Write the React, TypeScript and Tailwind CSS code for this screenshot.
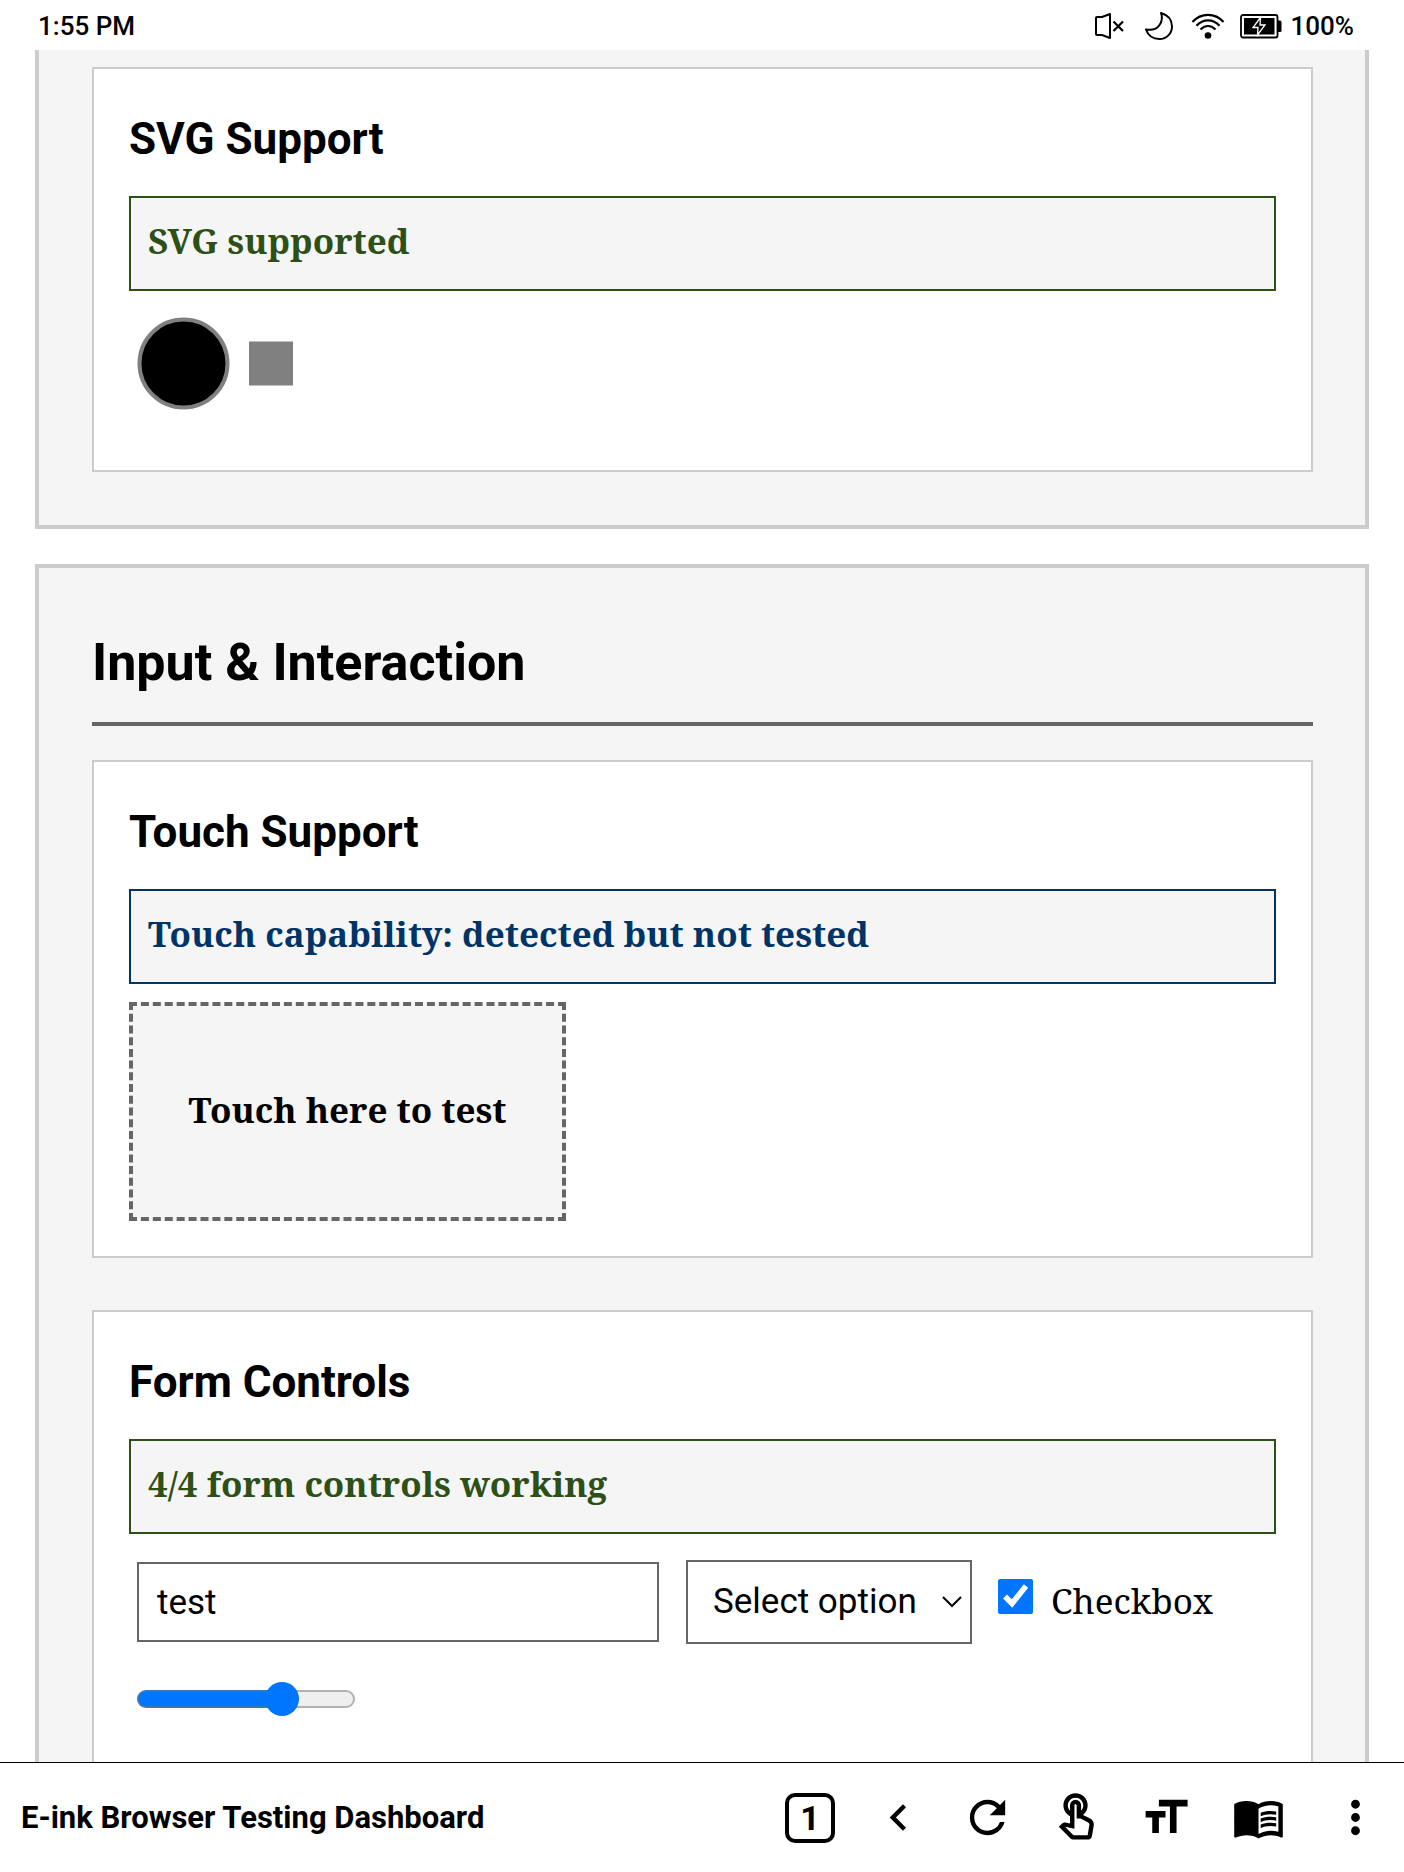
import { useState, type ReactNode } from "react";
import {
  MdChevronLeft,
  MdFormatSize,
  MdMenuBook,
  MdMoreVert,
  MdOutlineTouchApp,
  MdRefresh,
} from "react-icons/md";

function StatusBar() {
  return (
    <header className="flex h-[50px] shrink-0 items-center justify-between bg-white pt-[2px] pr-[50px] pl-[38px] text-[26px] leading-[48px] font-medium">
      <time>1:55 PM</time>
      <div className="flex items-center">
        <svg aria-label="Muted" className="mr-[19px] h-[28px] w-[32px]" viewBox="0 0 32 28" fill="none" stroke="#000" strokeWidth="2" strokeLinejoin="round">
          <path d="M3 6 Q3 5 4 5 H9 L17 2 V26 L9 23 H4 Q3 23 3 22 Z" />
          <path d="M20.500 9.500 L30 19 M30 9.500 L20.500 19" strokeWidth="2.200" />
        </svg>
        <svg aria-label="Night mode" className="mr-[17px] h-[30px] w-[30px]" viewBox="0 0 30 30" fill="none" stroke="#000" strokeWidth="2" strokeLinejoin="round">
          <path d="M17 2 C24 4 28 9 28 15.500 C28 22.500 22.500 28 15.500 28 C9 28 4 24.500 2 18.500 C8 19.500 13 18 15.500 14 C18 10.500 18.500 6 17 2 Z" />
        </svg>
        <svg aria-label="Wi-Fi" className="mr-[15px] h-[28px] w-[34px]" viewBox="0 0 34 28" fill="none" stroke="#000" strokeWidth="2.200">
          <path d="M1.500 10 C10 0.500 24 0.500 32.500 10" />
          <path d="M5.500 13.800 C12 6.500 22 6.500 28.500 13.800" />
          <path d="M9.500 17.500 C14 12.800 20 12.800 24.500 17.500" />
          <circle cx="17" cy="23.500" r="3.300" fill="#000" stroke="none" />
        </svg>
        <svg aria-label="Battery charging" className="mr-[9px] h-[26px] w-[42px]" viewBox="0 0 42 26" fill="none">
          <rect x="1" y="2" width="36.500" height="22.500" rx="2" stroke="#000" strokeWidth="1.800" />
          <rect x="4" y="5" width="30.500" height="16.500" fill="#000" />
          <path d="M38 7.500 H40 Q41.500 7.500 41.500 9 V17.500 Q41.500 19 40 19 H38 Z" fill="#000" />
          <path d="M20.500 4.500 L13 14.500 H18 L17.500 22 L25 12 H20 Z" fill="#000" stroke="#fff" strokeWidth="1.300" />
        </svg>
        <span>100%</span>
      </div>
    </header>
  );
}

function Card({ title, children }: { title: string; children: ReactNode }) {
  return (
    <article className="border-2 border-[#ccc] bg-white p-[35px]">
      <h3 className="mb-[22px] text-[44px] leading-[70px] font-bold">{title}</h3>
      {children}
    </article>
  );
}

function Result({ tone, children }: { tone: "pass" | "info"; children: ReactNode }) {
  const color = tone === "pass" ? "border-[#2d5016] text-[#2d5016]" : "border-[#003366] text-[#003366]";
  return (
    <p className={`border-2 bg-[#f5f5f5] px-[17px] pt-[15px] pb-5 font-['Noto_Serif',serif] text-[35px] leading-[56px] font-bold ${color}`}>
      {children}
    </p>
  );
}

function FormControls() {
  const [text, setText] = useState("test");
  const [checked, setChecked] = useState(true);
  const [level, setLevel] = useState(70);
  return (
    <form className="px-2">
      <div className="mt-[26px] flex items-center">
        <input
          type="text"
          aria-label="Text"
          value={text}
          onChange={(e) => setText(e.target.value)}
          className="h-[80px] w-[522px] border-2 border-[#666] bg-white px-[18px] text-[35px] outline-none"
        />
        <div className="relative ml-[27px]">
          <select
            aria-label="Option"
            className="h-[84px] w-[286px] appearance-none border-2 border-[#666] bg-white pl-[25px] text-[35px] outline-none"
          >
            <option>Select option</option>
            <option>Option 1</option>
          </select>
          <svg className="pointer-events-none absolute top-[36px] right-[10px] h-[12px] w-[20px]" viewBox="0 0 20 12" fill="none" stroke="#000" strokeWidth="2">
            <path d="M1 1 L10 10 L19 1" />
          </svg>
        </div>
        <label className="ml-[26px] flex items-center gap-[18px] pb-[2px] font-['Noto_Serif',serif] text-[35px] leading-[56px]">
          <input
            type="checkbox"
            checked={checked}
            onChange={(e) => setChecked(e.target.checked)}
            className="mb-[10px] h-[35px] w-[35px] accent-[#0075ff]"
          />
          Checkbox
        </label>
      </div>
      <input
        type="range"
        aria-label="Level"
        min={0}
        max={100}
        value={level}
        onChange={(e) => setLevel(Number(e.target.value))}
        style={{
          backgroundImage: `linear-gradient(to right, #0075ff ${level}%, #efefef ${level}%)`,
        }}
        className="mt-[46px] mb-[38px] block h-[18px] w-[218px] appearance-none rounded-full border-2 border-[#767676]/50 bg-origin-border outline-none [&::-webkit-slider-thumb]:h-[34px] [&::-webkit-slider-thumb]:w-[34px] [&::-webkit-slider-thumb]:appearance-none [&::-webkit-slider-thumb]:rounded-full [&::-webkit-slider-thumb]:bg-[#0075ff]"
      />
    </form>
  );
}

function Toolbar() {
  return (
    <footer className="flex h-[110px] shrink-0 items-center justify-between border-t border-black bg-white pr-[22px] pl-[21px]">
      <h1 className="truncate text-[31px] leading-[40px] font-bold">E-ink Browser Testing Dashboard</h1>
      <nav className="flex items-center gap-[36px] text-[53px]">
        <button type="button" aria-label="Tabs" className="mr-px h-[50px] w-[50px] rounded-[10px] border-4 border-black text-[34px] leading-[42px] font-bold">
          1
        </button>
        <button type="button" aria-label="Back"><MdChevronLeft /></button>
        <button type="button" aria-label="Refresh"><MdRefresh /></button>
        <button type="button" aria-label="Touch mode"><MdOutlineTouchApp /></button>
        <button type="button" aria-label="Text size"><MdFormatSize /></button>
        <button type="button" aria-label="Reader" className="ml-1"><MdMenuBook /></button>
        <button type="button" aria-label="More" className="ml-2"><MdMoreVert /></button>
      </nav>
    </footer>
  );
}

export default function App() {
  return (
    <div className="flex h-screen flex-col overflow-hidden bg-white font-[Roboto,sans-serif] text-black">
      <StatusBar />
      <main className="min-h-0 flex-1 overflow-hidden px-[35px]">
        <section className="mb-[35px] border-4 border-t-0 border-[#ccc] bg-[#f5f5f5] pt-[17px] pr-[52px] pb-[53px] pl-[53px]">
          <Card title="SVG Support">
            <Result tone="pass">SVG supported</Result>
            <svg aria-label="Circle and square" className="mt-[17px] h-[127px] w-[220px]" viewBox="0 0 220 127">
              <circle cx="54.500" cy="55.500" r="44" fill="#000" stroke="#808080" strokeWidth="4" />
              <rect x="120" y="33.500" width="44" height="44" fill="#808080" />
            </svg>
          </Card>
        </section>

        <section className="border-4 border-[#ccc] bg-[#f5f5f5] py-[53px] pr-[52px] pl-[53px]">
          <h2 className="mb-[34px] border-b-4 border-[#666] pb-[18px] text-[52px] leading-[83px] font-bold">
            Input &amp; Interaction
          </h2>
          <div className="flex flex-col gap-[52px]">
            <Card title="Touch Support">
              <Result tone="info">Touch capability: detected but not tested</Result>
              <button
                type="button"
                className="mt-[18px] flex h-[219px] w-[437px] items-center justify-center border-4 border-dashed border-[#666] bg-[#f5f5f5] pb-[3px] font-['Noto_Serif',serif] text-[35px] font-bold"
              >
                Touch here to test
              </button>
            </Card>
            <Card title="Form Controls">
              <Result tone="pass">4/4 form controls working</Result>
              <FormControls />
            </Card>
          </div>
        </section>
      </main>
      <Toolbar />
    </div>
  );
}
